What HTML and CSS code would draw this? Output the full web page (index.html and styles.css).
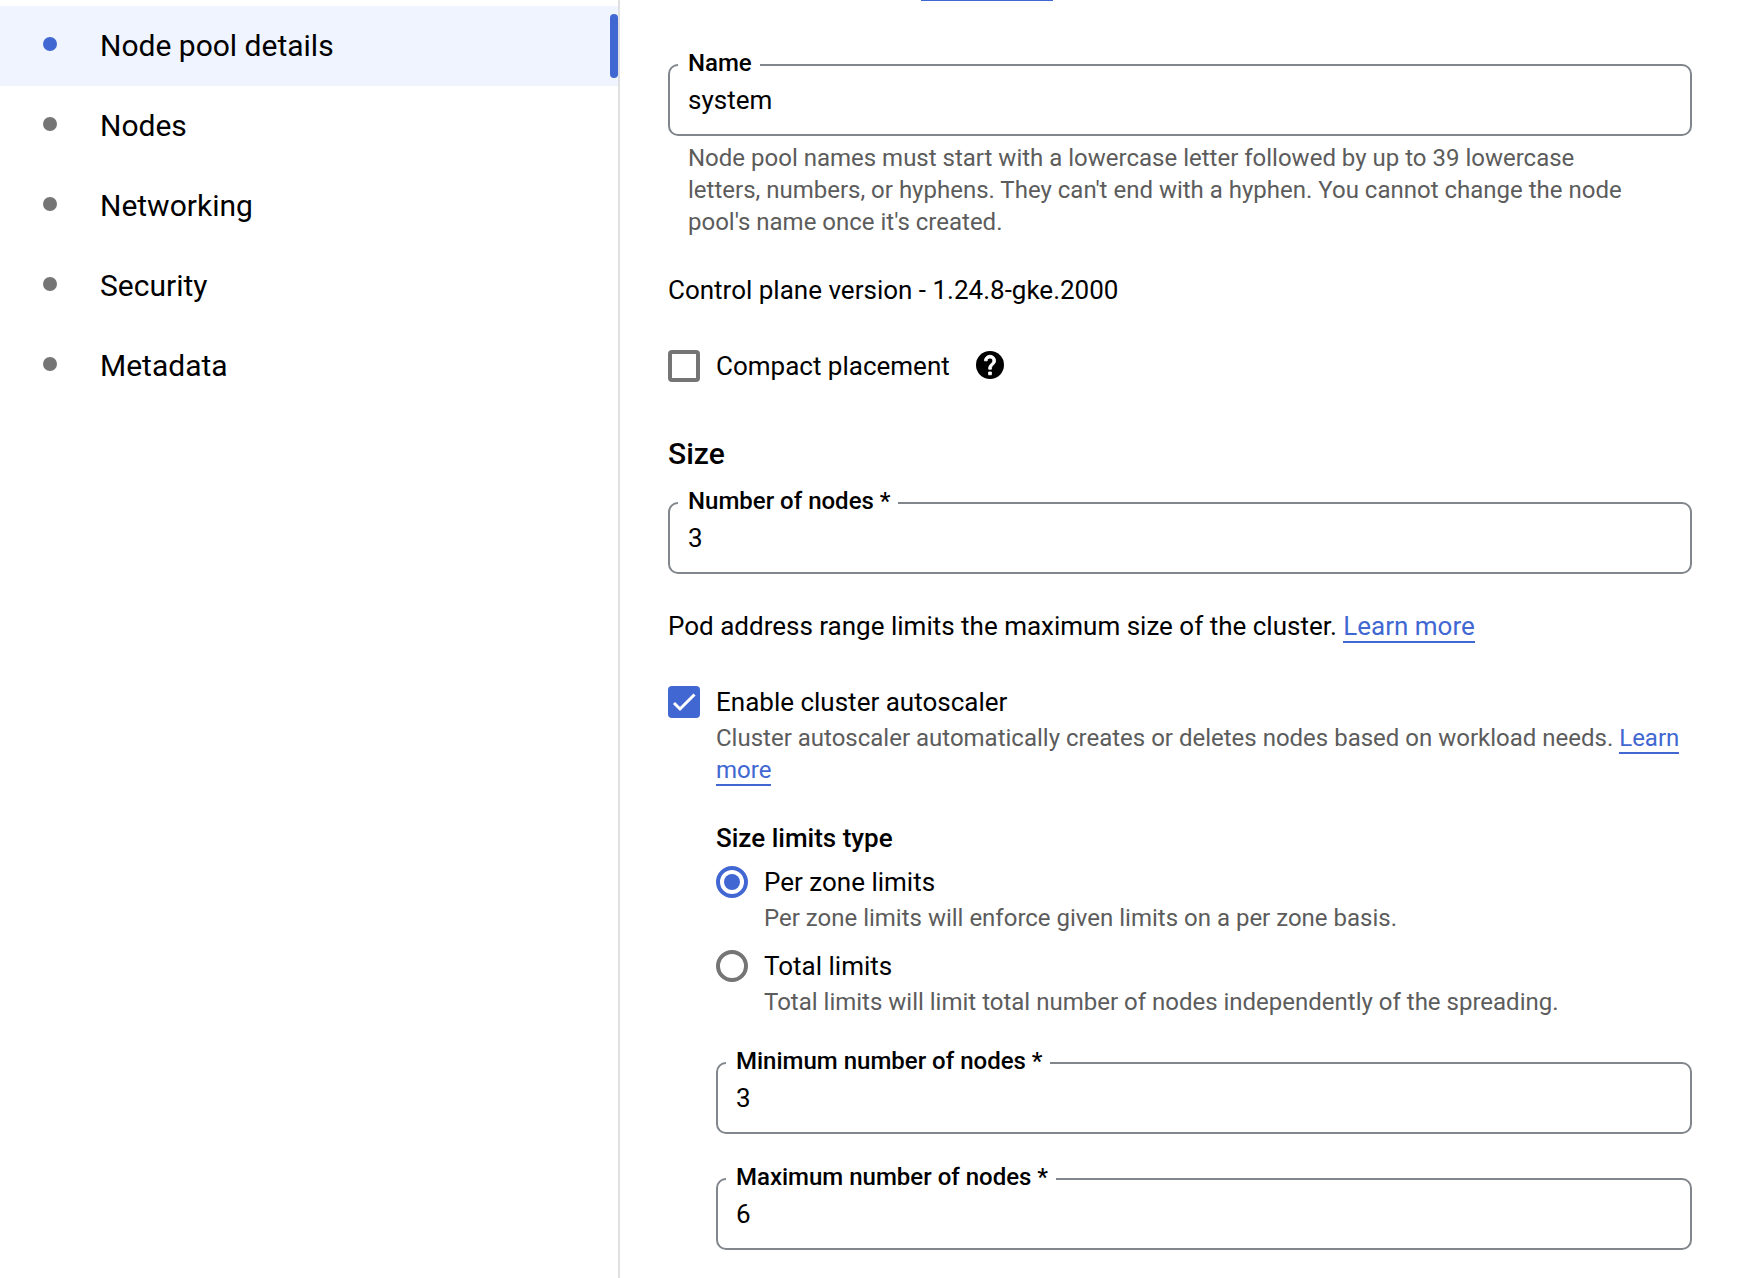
FILE: index.html
```html
<!DOCTYPE html>
<html lang="en">
<head>
<meta charset="utf-8">
<meta name="viewport" content="width=device-width, initial-scale=1">
<title>Node pool details</title>
<link rel="stylesheet" href="styles.css">
</head>
<body>
<div class="layout">
  <nav class="sidebar">
    <a class="step step-active" href="#details" aria-current="step"><span class="dot"></span>Node pool details</a>
    <a class="step" href="#nodes"><span class="dot"></span>Nodes</a>
    <a class="step" href="#networking"><span class="dot"></span>Networking</a>
    <a class="step" href="#security"><span class="dot"></span>Security</a>
    <a class="step" href="#metadata"><span class="dot"></span>Metadata</a>
  </nav>
  <main class="content">
    <a class="intro-link" href="#intro"></a>
    <form class="form">
      <div class="field field-first">
        <label class="field-label" for="name">Name</label>
        <input class="field-input" id="name" type="text" value="system">
      </div>
      <p class="hint field-hint">Node pool names must start with a lowercase letter followed by up to 39 lowercase letters, numbers, or hyphens. They can't end with a hyphen. You cannot change the node pool's name once it's created.</p>

      <p class="text">Control plane version - 1.24.8-gke.2000</p>

      <div class="option option-spaced">
        <input class="check" id="compact" type="checkbox">
        <label for="compact">Compact placement</label>
        <button class="help" type="button" aria-label="Help">
          <svg viewBox="2 2 20 20" width="28" height="28"><circle cx="12" cy="12" r="10"/><path fill="#fff" stroke="#fff" stroke-width=".6" d="M13 19h-2v-2h2v2zm2.070-7.750l-.9.920C13.450 12.900 13 13.500 13 15h-2v-.5c0-1.100.450-2.100 1.170-2.830l1.240-1.260c.370-.360.590-.860.590-1.410 0-1.100-.9-2-2-2s-2 .9-2 2H8c0-2.210 1.790-4 4-4s4 1.790 4 4c0 .880-.360 1.680-.930 2.250z"/></svg>
        </button>
      </div>

      <h2 class="heading">Size</h2>
      <div class="field">
        <label class="field-label" for="count">Number of nodes *</label>
        <input class="field-input" id="count" type="text" inputmode="numeric" value="3">
      </div>

      <p class="text">Pod address range limits the maximum size of the cluster. <a class="link" href="#range">Learn more</a></p>

      <div class="option option-spaced">
        <input class="check" id="autoscaler" type="checkbox" checked>
        <label for="autoscaler">Enable cluster autoscaler</label>
      </div>
      <div class="nested">
        <p class="hint">Cluster autoscaler automatically creates or deletes nodes based on workload needs. <a class="link" href="#autoscaling">Learn more</a></p>

        <h3 class="subheading" id="limits">Size limits type</h3>
        <div class="radios" role="radiogroup" aria-labelledby="limits">
          <div>
            <div class="option">
              <input class="radio" id="zone" type="radio" name="limits" checked>
              <label for="zone">Per zone limits</label>
            </div>
            <p class="hint nested">Per zone limits will enforce given limits on a per zone basis.</p>
          </div>
          <div>
            <div class="option">
              <input class="radio" id="total" type="radio" name="limits">
              <label for="total">Total limits</label>
            </div>
            <p class="hint nested">Total limits will limit total number of nodes independently of the spreading.</p>
          </div>
        </div>

        <div class="field field-spaced">
          <label class="field-label" for="min">Minimum number of nodes *</label>
          <input class="field-input" id="min" type="text" inputmode="numeric" value="3">
        </div>
        <div class="field field-spaced">
          <label class="field-label" for="max">Maximum number of nodes *</label>
          <input class="field-input" id="max" type="text" inputmode="numeric" value="6">
        </div>
      </div>
    </form>
  </main>
</div>
</body>
</html>
```
FILE: styles.css
```css
* {
  box-sizing: border-box;
}

body {
  margin: 0;
  background: #fff;
  color: #000;
  font-family: Roboto, "Liberation Sans", sans-serif;
  font-size: 26px;
  line-height: 40px;
}

h2,
h3,
p {
  margin: 0;
}

.layout {
  display: grid;
  grid-template-columns: 620px minmax(0, 1fr);
  min-height: 100vh;
}

.sidebar {
  padding-top: 6px;
  border-right: 2px solid #e0e0e0;
}

.step {
  position: relative;
  display: flex;
  align-items: center;
  gap: 43px;
  height: 80px;
  padding-left: 43px;
  color: #000;
  font-size: 30px;
  text-decoration: none;
}

.step-active {
  background: #f0f4ff;
}

.step-active::after {
  content: "";
  position: absolute;
  top: 8px;
  right: 0;
  bottom: 8px;
  width: 8px;
  border-radius: 4px;
  background: #4167d2;
}

.dot {
  width: 14px;
  height: 14px;
  margin-bottom: 4px;
  border-radius: 50%;
  background: #757575;
}

.step-active .dot {
  background: #4167d2;
}

.content {
  padding: 0 72px 28px 48px;
}

.intro-link {
  display: block;
  width: 132px;
  height: 1px;
  margin-left: 253px;
  background: #4167d2;
}

.field {
  position: relative;
  margin-top: 28px;
}

.field-first {
  margin-top: 63px;
}

.field-spaced {
  margin-top: 44px;
}

.field-label {
  position: absolute;
  top: -17px;
  left: 10px;
  padding: 0 8px 0 10px;
  background: #fff;
  font-size: 24px;
  font-weight: 500;
  line-height: 32px;
}

.field-input {
  display: block;
  width: 100%;
  height: 72px;
  padding: 0 18px;
  border: 2px solid #80868b;
  border-radius: 10px;
  background: #fff;
  color: #000;
  font: inherit;
}

.hint {
  color: #5c5c5c;
  font-size: 24px;
  line-height: 32px;
}

.field-hint {
  padding: 6px 52px 0 20px;
}

.text {
  margin-top: 32px;
}

.option {
  display: flex;
  align-items: center;
  gap: 16px;
}

.option-spaced {
  margin-top: 36px;
}

.check,
.radio {
  appearance: none;
  flex: none;
  display: grid;
  place-items: center;
  width: 32px;
  height: 32px;
  margin: 0;
  border: 4px solid #757575;
  border-radius: 4px;
}

.check:checked {
  border: 0;
  background: #4167d2 url("data:image/svg+xml,%3Csvg xmlns='http://www.w3.org/2000/svg' viewBox='0 0 32 32'%3E%3Cpath d='M6 17l6 6L26.500 8.500' fill='none' stroke='%23fff' stroke-width='3'/%3E%3C/svg%3E") center / 32px 32px no-repeat;
}

.radio {
  border-radius: 50%;
}

.radio:checked {
  border-color: #4167d2;
}

.radio:checked::before {
  content: "";
  width: 16px;
  height: 16px;
  border-radius: 50%;
  background: #4167d2;
}

.help {
  display: flex;
  margin: 0 0 2px 10px;
  padding: 0;
  border: 0;
  background: none;
}

.heading {
  margin-top: 48px;
  font-size: 30px;
  font-weight: 500;
}

.subheading {
  margin-top: 32px;
  font-size: 26px;
  font-weight: 500;
}

.link {
  border-bottom: 2px solid #4167d2;
  color: #4167d2;
  text-decoration: none;
}

.nested {
  padding-left: 48px;
}

.radios {
  display: grid;
  gap: 12px;
  margin-top: 4px;
}
```
